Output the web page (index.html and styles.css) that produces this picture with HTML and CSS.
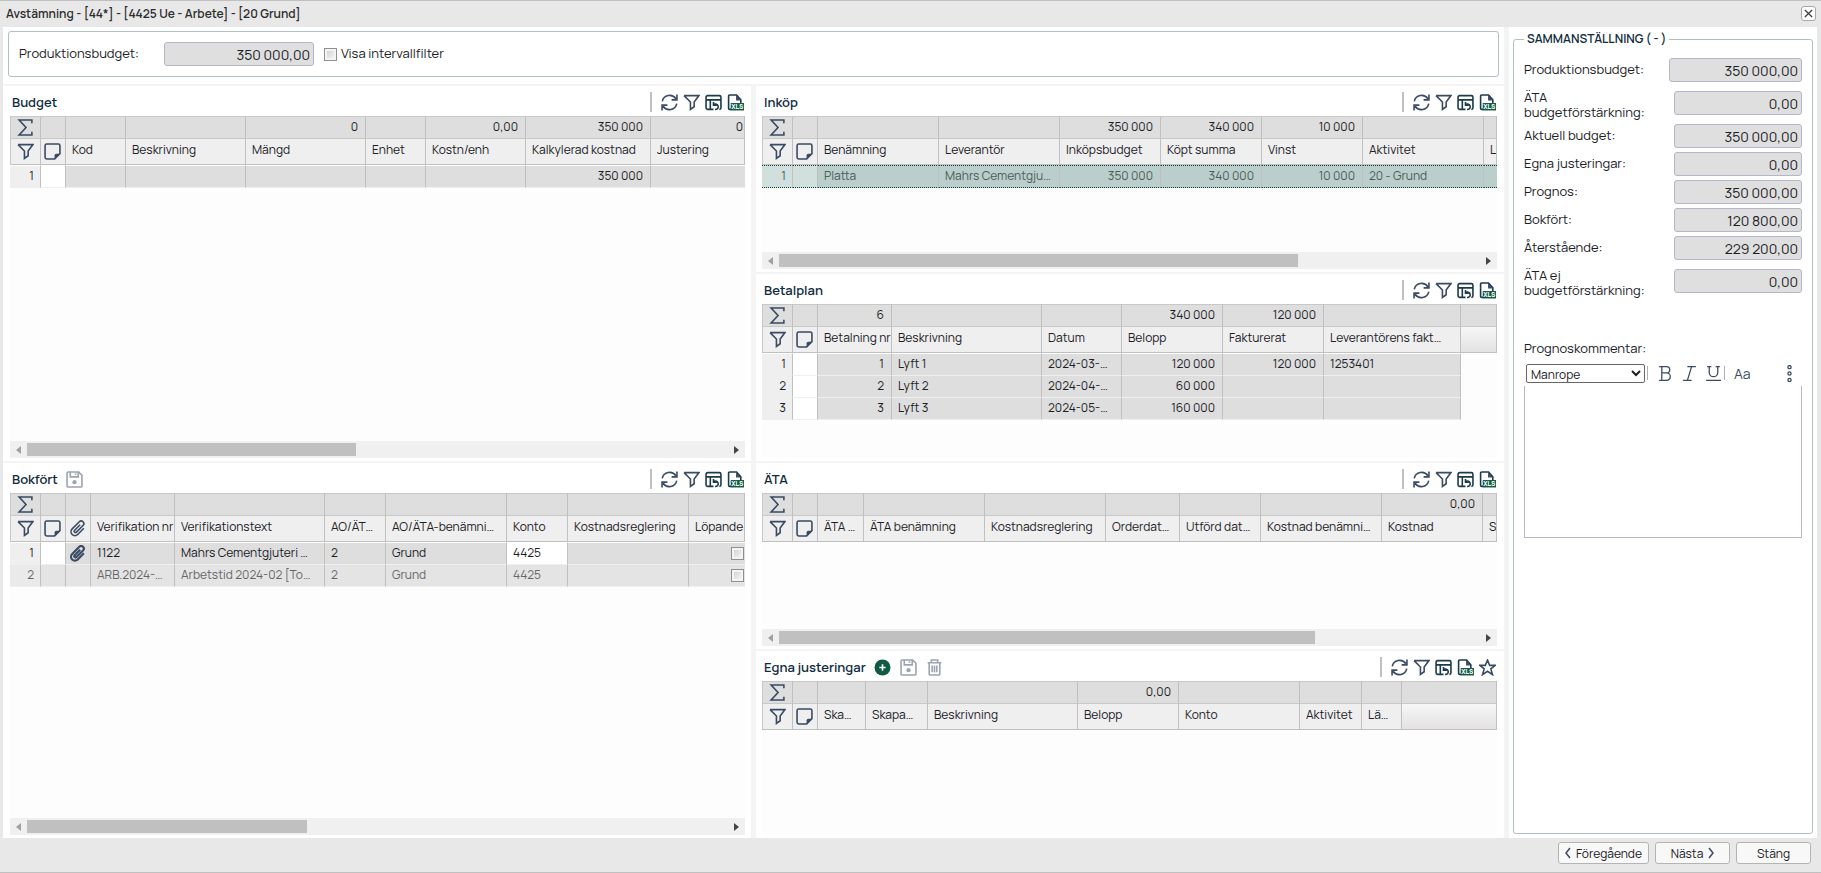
FILE: index.html
```html
<!DOCTYPE html>
<html lang="sv">
	<head>
		<meta charset="utf-8" />
		<title>Avstämning</title>
		<link rel="stylesheet" href="styles.css">
	</head>
	<body>
		<svg class="sprite" aria-hidden="true">
			<symbol id="sum" viewBox="0 0 16 16"><path d="M14 4V1H2l6.500 7L2 15h12v-3" /></symbol>
			<symbol id="filter" viewBox="0 0 16 16"><path d="M1 1.500h14l-4.500 6V12L7 14.500v-7L1 1.500" /></symbol>
			<symbol id="note" viewBox="0 0 16 16"><path d="M2.500 1h11a1.500 1.500 0 0 1 1.500 1.500V10l-5 5H2.500A1.500 1.500 0 0 1 1 13.500v-11A1.500 1.500 0 0 1 2.500 1z" /><path class="solid" d="M10 15v-3.500a1.500 1.500 0 0 1 1.500-1.500H15z" /></symbol>
			<symbol id="clip" viewBox="0 0 16 16"><path d="M10.500 4.500L5.300 9.700a1.200 1.200 0 0 0 1.700 1.700l6.200-6.200a2.400 2.400 0 0 0-3.500-3.500L3 8.400a3.600 3.600 0 0 0 5.200 5.200L14 7.800" /></symbol>
			<symbol id="refresh" viewBox="0 0 16 16"><path d="M1.200 7A7 6.800 0 0 1 14 4.500M14.800 9A7 6.800 0 0 1 2 11.500M15 .5v5h-5M1 15.500v-5h5" /></symbol>
			<symbol id="table" viewBox="0 0 16 16"><path d="M8 14.500H2.500A1.500 1.500 0 0 1 1 13V3a1.500 1.500 0 0 1 1.500-1.500h11A1.500 1.500 0 0 1 15 3v10a1.500 1.500 0 0 1-1.500 1.500M1 5.500h14M5 5.500v9" /><path d="M8 7.500v3h3M8.500 10a2.500 2.500 0 1 1 1 4.500" /></symbol>
			<symbol id="xls" viewBox="0 0 16 16"><path d="M4 14.500H2.500A1 1 0 0 1 1.500 13.500V2a1 1 0 0 1 1-1H9l4 4.500V9" /><path class="solid" d="M8.500 1v5H13z" /><path class="green" d="M3.500 8.500H16v7H3.500z" /><text x="4" y="14.200">XLS</text></symbol>
			<symbol id="save" viewBox="0 0 16 16"><path d="M2 1h10l3 3v10a1 1 0 0 1-1 1H2a1 1 0 0 1-1-1V2a1 1 0 0 1 1-1zM4 1v4.500h7.500V1M9 2v1.500" /><circle class="solid" cx="8" cy="10.500" r="2" /></symbol>
			<symbol id="trash" viewBox="0 0 16 16"><path d="M1.500 3.500h13M5 3.500V1h6v2.500M3 3.500V14a1 1 0 0 0 1 1h8a1 1 0 0 0 1-1V3.500M5.800 6v6.500M8 6v6.500M10.200 6v6.500" /></symbol>
			<symbol id="star" viewBox="0 0 16 16"><path d="M8 1l2 5h5.300l-4.200 3.300 1.600 5.400L8 11.500l-4.700 3.200 1.600-5.400L.7 6H6z" /></symbol>
			<symbol id="add" viewBox="0 0 16 16"><circle class="green" cx="8" cy="8" r="7.500" /><path class="plus" d="M8 5v6M5 8h6" /></symbol>
		</svg>

		<header class="titlebar">
			<h1>Avstämning - [44*] - [4425 Ue - Arbete] - [20 Grund]</h1>
			<button class="close" aria-label="Stäng fönster"><svg viewBox="0 0 10 10"><path d="M1 1l8 8M9 1L1 9" /></svg></button>
		</header>

		<div class="content">
			<main class="main">
				<div class="filterWrap">
					<div class="filterBox">
						<label class="filterLabel" for="prodBudget">Produktionsbudget:</label>
						<input class="amount" id="prodBudget" type="text" value="350 000,00" readonly />
						<input class="check" id="interval" type="checkbox" />
						<label for="interval">Visa intervallfilter</label>
					</div>
				</div>

				<div class="columns">
					<div class="column left">
						<section class="panel">
							<div class="panelHead">
								<h2>Budget</h2>
								<div class="tools">
									<button aria-label="Uppdatera"><svg><use href="#refresh" /></svg></button>
									<button aria-label="Filter"><svg><use href="#filter" /></svg></button>
									<button aria-label="Kolumner"><svg class="dark"><use href="#table" /></svg></button>
									<button aria-label="Excel"><svg class="dark"><use href="#xls" /></svg></button>
								</div>
							</div>
							<div class="gridBody">
								<table>
									<colgroup><col class="w31"><col class="w25"><col class="w60"><col class="w120"><col class="w120"><col class="w60"><col class="w100"><col class="w125"><col></colgroup>
									<thead>
										<tr class="sum"><td class="ico"><svg><use href="#sum" /></svg></td><td></td><td></td><td></td><td class="num">0</td><td></td><td class="num">0,00</td><td class="num">350 000</td><td class="num cut">0</td></tr>
										<tr class="head"><th class="ico"><svg><use href="#filter" /></svg></th><th class="ico"><svg><use href="#note" /></svg></th><th>Kod</th><th>Beskrivning</th><th>Mängd</th><th>Enhet</th><th>Kostn/enh</th><th>Kalkylerad kostnad</th><th>Justering</th></tr>
									</thead>
									<tbody>
										<tr><td class="rowNo">1</td><td class="edit"></td><td></td><td></td><td></td><td></td><td></td><td class="num">350 000</td><td></td></tr>
									</tbody>
								</table>
							</div>
							<div class="scroll"><div class="track"><div class="thumb" style="width: 47%"></div></div></div>
						</section>

						<section class="panel">
							<div class="panelHead">
								<h2>Bokfört</h2>
								<div class="actions">
									<button aria-label="Spara" disabled><svg><use href="#save" /></svg></button>
								</div>
								<div class="tools">
									<button aria-label="Uppdatera"><svg><use href="#refresh" /></svg></button>
									<button aria-label="Filter"><svg><use href="#filter" /></svg></button>
									<button aria-label="Kolumner"><svg class="dark"><use href="#table" /></svg></button>
									<button aria-label="Excel"><svg class="dark"><use href="#xls" /></svg></button>
								</div>
							</div>
							<div class="gridBody">
								<table>
									<colgroup><col class="w31"><col class="w25"><col class="w25"><col class="w84"><col class="w150"><col class="w61"><col class="w121"><col class="w61"><col class="w121"><col></colgroup>
									<thead>
										<tr class="sum"><td class="ico"><svg><use href="#sum" /></svg></td><td></td><td></td><td></td><td></td><td></td><td></td><td></td><td></td><td></td></tr>
										<tr class="head"><th class="ico"><svg><use href="#filter" /></svg></th><th class="ico"><svg><use href="#note" /></svg></th><th class="ico"><svg><use href="#clip" /></svg></th><th class="clipped">Verifikation nr</th><th>Verifikationstext</th><th>AO/ÄTA-nr</th><th>AO/ÄTA-benämning</th><th>Konto</th><th>Kostnadsreglering</th><th class="clipped">Löpande</th></tr>
									</thead>
									<tbody>
										<tr><td class="rowNo">1</td><td class="edit"></td><td class="ico"><svg class="bold"><use href="#clip" /></svg></td><td>1122</td><td class="tight">Mahrs Cementgjuteri AB</td><td>2</td><td>Grund</td><td class="edit">4425</td><td></td><td class="num cut"><input class="check" type="checkbox" aria-label="Löpande 1" /></td></tr>
										<tr class="muted"><td class="rowNo">2</td><td></td><td></td><td>ARB.2024-02</td><td>Arbetstid 2024-02 [Tommy]</td><td>2</td><td>Grund</td><td>4425</td><td></td><td class="num cut"><input class="check" type="checkbox" aria-label="Löpande 2" /></td></tr>
									</tbody>
								</table>
							</div>
							<div class="scroll"><div class="track"><div class="thumb" style="width: 40%"></div></div></div>
						</section>
					</div>

					<div class="column right">
						<section class="panel">
							<div class="panelHead">
								<h2>Inköp</h2>
								<div class="tools">
									<button aria-label="Uppdatera"><svg><use href="#refresh" /></svg></button>
									<button aria-label="Filter"><svg><use href="#filter" /></svg></button>
									<button aria-label="Kolumner"><svg class="dark"><use href="#table" /></svg></button>
									<button aria-label="Excel"><svg class="dark"><use href="#xls" /></svg></button>
								</div>
							</div>
							<div class="gridBody">
								<table>
									<colgroup><col class="w31"><col class="w25"><col class="w121"><col class="w121"><col class="w101"><col class="w101"><col class="w101"><col class="w121"><col></colgroup>
									<thead>
										<tr class="sum"><td class="ico"><svg><use href="#sum" /></svg></td><td></td><td></td><td></td><td class="num">350 000</td><td class="num">340 000</td><td class="num">10 000</td><td></td><td></td></tr>
										<tr class="head"><th class="ico"><svg><use href="#filter" /></svg></th><th class="ico"><svg><use href="#note" /></svg></th><th>Benämning</th><th>Leverantör</th><th>Inköpsbudget</th><th>Köpt summa</th><th>Vinst</th><th>Aktivitet</th><th class="clipped">L</th></tr>
									</thead>
									<tbody>
										<tr class="selected"><td class="rowNo">1</td><td class="edit"></td><td>Platta</td><td>Mahrs Cementgjuteri</td><td class="num">350 000</td><td class="num">340 000</td><td class="num">10 000</td><td>20 - Grund</td><td></td></tr>
									</tbody>
								</table>
							</div>
							<div class="scroll"><div class="track"><div class="thumb" style="width: 74%"></div></div></div>
						</section>

						<section class="panel">
							<div class="panelHead">
								<h2>Betalplan</h2>
								<div class="tools">
									<button aria-label="Uppdatera"><svg><use href="#refresh" /></svg></button>
									<button aria-label="Filter"><svg><use href="#filter" /></svg></button>
									<button aria-label="Kolumner"><svg class="dark"><use href="#table" /></svg></button>
									<button aria-label="Excel"><svg class="dark"><use href="#xls" /></svg></button>
								</div>
							</div>
							<div class="gridBody">
								<table>
									<colgroup><col class="w31"><col class="w25"><col class="w74"><col class="w150"><col class="w80"><col class="w101"><col class="w101"><col class="w137"><col></colgroup>
									<thead>
										<tr class="sum"><td class="ico"><svg><use href="#sum" /></svg></td><td></td><td class="num">6</td><td></td><td></td><td class="num">340 000</td><td class="num">120 000</td><td></td><td></td></tr>
										<tr class="head"><th class="ico"><svg><use href="#filter" /></svg></th><th class="ico"><svg><use href="#note" /></svg></th><th class="clipped">Betalning nr</th><th>Beskrivning</th><th>Datum</th><th>Belopp</th><th>Fakturerat</th><th class="tight">Leverantörens fakturanr</th><th class="filler"></th></tr>
									</thead>
									<tbody>
										<tr><td class="rowNo">1</td><td class="edit"></td><td class="num">1</td><td>Lyft 1</td><td class="tight">2024-03-31</td><td class="num">120 000</td><td class="num">120 000</td><td>1253401</td></tr>
										<tr><td class="rowNo">2</td><td class="edit"></td><td class="num">2</td><td>Lyft 2</td><td class="tight">2024-04-30</td><td class="num">60 000</td><td></td><td></td></tr>
										<tr><td class="rowNo">3</td><td class="edit"></td><td class="num">3</td><td>Lyft 3</td><td class="tight">2024-05-31</td><td class="num">160 000</td><td></td><td></td></tr>
									</tbody>
								</table>
							</div>
						</section>

						<section class="panel">
							<div class="panelHead">
								<h2>ÄTA</h2>
								<div class="tools">
									<button aria-label="Uppdatera"><svg><use href="#refresh" /></svg></button>
									<button aria-label="Filter"><svg><use href="#filter" /></svg></button>
									<button aria-label="Kolumner"><svg class="dark"><use href="#table" /></svg></button>
									<button aria-label="Excel"><svg class="dark"><use href="#xls" /></svg></button>
								</div>
							</div>
							<div class="gridBody">
								<table>
									<colgroup><col class="w31"><col class="w25"><col class="w46"><col class="w121"><col class="w121"><col class="w74"><col class="w81"><col class="w121"><col class="w101"><col></colgroup>
									<thead>
										<tr class="sum"><td class="ico"><svg><use href="#sum" /></svg></td><td></td><td></td><td></td><td></td><td></td><td></td><td></td><td class="num">0,00</td><td></td></tr>
										<tr class="head"><th class="ico"><svg><use href="#filter" /></svg></th><th class="ico"><svg><use href="#note" /></svg></th><th>ÄTA nr</th><th>ÄTA benämning</th><th>Kostnadsreglering</th><th>Orderdatum</th><th>Utförd datum</th><th>Kostnad benämning</th><th>Kostnad</th><th class="clipped">S</th></tr>
									</thead>
								</table>
							</div>
							<div class="scroll"><div class="track"><div class="thumb" style="width: 76.4%"></div></div></div>
						</section>

						<section class="panel">
							<div class="panelHead">
								<h2>Egna justeringar</h2>
								<div class="actions">
									<button aria-label="Lägg till"><svg><use href="#add" /></svg></button>
									<button aria-label="Spara" disabled><svg><use href="#save" /></svg></button>
									<button aria-label="Ta bort" disabled><svg><use href="#trash" /></svg></button>
								</div>
								<div class="tools">
									<button aria-label="Uppdatera"><svg><use href="#refresh" /></svg></button>
									<button aria-label="Filter"><svg><use href="#filter" /></svg></button>
									<button aria-label="Kolumner"><svg class="dark"><use href="#table" /></svg></button>
									<button aria-label="Excel"><svg class="dark"><use href="#xls" /></svg></button>
									<button aria-label="Favorit"><svg><use href="#star" /></svg></button>
								</div>
							</div>
							<div class="gridBody">
								<table>
									<colgroup><col class="w31"><col class="w25"><col class="w48"><col class="w62"><col class="w150"><col class="w101"><col class="w121"><col class="w62"><col class="w40"><col></colgroup>
									<thead>
										<tr class="sum"><td class="ico"><svg><use href="#sum" /></svg></td><td></td><td></td><td></td><td></td><td class="num">0,00</td><td></td><td></td><td></td><td></td></tr>
										<tr class="head"><th class="ico"><svg><use href="#filter" /></svg></th><th class="ico"><svg><use href="#note" /></svg></th><th class="tight">Skapad</th><th class="tight">Skapad av</th><th>Beskrivning</th><th>Belopp</th><th>Konto</th><th class="clipped">Aktivitet</th><th>Längd</th><th class="filler"></th></tr>
									</thead>
								</table>
							</div>
						</section>
					</div>
				</div>
			</main>

			<aside class="side">
				<fieldset>
					<legend>SAMMANSTÄLLNING ( - )</legend>
					<div class="field wide"><label for="s1">Produktionsbudget:</label><input class="amount" id="s1" type="text" value="350 000,00" readonly /></div>
					<div class="field tall"><label for="s2">ÄTA budgetförstärkning:</label><input class="amount" id="s2" type="text" value="0,00" readonly /></div>
					<div class="field"><label for="s3">Aktuell budget:</label><input class="amount" id="s3" type="text" value="350 000,00" readonly /></div>
					<div class="field"><label for="s4">Egna justeringar:</label><input class="amount" id="s4" type="text" value="0,00" readonly /></div>
					<div class="field"><label for="s5">Prognos:</label><input class="amount" id="s5" type="text" value="350 000,00" readonly /></div>
					<div class="field"><label for="s6">Bokfört:</label><input class="amount" id="s6" type="text" value="120 800,00" readonly /></div>
					<div class="field"><label for="s7">Återstående:</label><input class="amount" id="s7" type="text" value="229 200,00" readonly /></div>
					<div class="field tall"><label for="s8">ÄTA ej budgetförstärkning:</label><input class="amount" id="s8" type="text" value="0,00" readonly /></div>

					<label class="commentLabel" for="comment">Prognoskommentar:</label>
					<div class="editorBar">
						<select aria-label="Typsnitt"><option>Manrope</option></select>
						<div class="editorGroup marks">
							<button aria-label="Fet"><svg viewBox="0 0 16 16"><path d="M2 1.500h7a3 3 0 0 1 0 6H4.500M9 7.500a3.500 3.500 0 0 1 0 7H2M4.500 1.500v13" /></svg></button>
							<button aria-label="Kursiv"><svg viewBox="0 0 16 16"><path d="M6 1.500h8M2 14.500h8M10 1.500l-4 13" /></svg></button>
							<button aria-label="Understruken"><svg viewBox="0 0 16 16"><path d="M2 1.500h4M10 1.500h4M4 1.500V7a4 4 0 0 0 8 0V1.500M1 14.500h14" /></svg></button>
						</div>
						<div class="editorGroup"><button class="case">Aa</button></div>
						<button class="more" aria-label="Mer"><svg viewBox="0 0 16 16"><circle cx="8" cy="2" r="1.500" /><circle cx="8" cy="8" r="1.500" /><circle cx="8" cy="14" r="1.500" /></svg></button>
					</div>
					<textarea id="comment"></textarea>
				</fieldset>
			</aside>
		</div>

		<footer class="footer">
			<button class="btn prev"><svg viewBox="0 0 6 12"><path d="M5 1L1 6l4 5" /></svg>Föregående</button>
			<button class="btn">Nästa<svg viewBox="0 0 6 12"><path d="M1 1l4 5-4 5" /></svg></button>
			<button class="btn">Stäng</button>
		</footer>
	</body>
</html>
```

FILE: styles.css
```css
* {
	box-sizing: border-box;
}
body {
	margin: 0px;
	height: 100vh;
	display: flex;
	flex-direction: column;
	background: #e8e8e8;
	border-top: 1px solid #c0c0c0;
	border-bottom: 1px solid #c0c0c0;
	color: #1a2026;
	font-family: Manrope, Inter, "Liberation Sans", sans-serif;
	font-size: 13px;
	overflow: hidden;
}
button, input, select, textarea {
	font: inherit;
	color: inherit;
}
button {
	padding: 0px;
	border: none;
	background: none;
}
svg {
	display: block;
	width: 17px;
	height: 17px;
	fill: none;
	stroke: #3a4b63;
	stroke-width: 1.5;
}
.sprite {
	display: none;
}
.solid {
	fill: #3a4b63;
	stroke: none;
}
.green {
	fill: #0f5a43;
	stroke: none;
}
.plus {
	stroke: #fff;
}
symbol text {
	fill: #fff;
	stroke: none;
	font-size: 6px;
	font-weight: 800;
}
svg.dark {
	stroke: #1c3a4c;
}
svg.bold {
	stroke-width: 2;
}

/* title bar */
.titlebar {
	height: 26px;
	padding: 0px 5px 1px 6px;
	display: flex;
	align-items: center;
	justify-content: space-between;
}
h1 {
	margin: 0px;
	font-size: 12px;
	font-weight: 600;
	color: #2c2c2c;
}
.close {
	width: 15px;
	height: 15px;
	display: flex;
	align-items: center;
	justify-content: center;
	background: #fdfdfd;
	border: 1px solid #a8a8a8;
	border-radius: 3px;
}
.close svg {
	width: 9px;
	height: 9px;
	stroke: #444;
}

/* layout */
.content {
	flex: 1;
	min-height: 0px;
	margin: 0px 4px 0px 3px;
	display: flex;
	background: #fff;
}
.main {
	flex: 1;
	min-width: 0px;
	display: flex;
	flex-direction: column;
}
.filterWrap {
	padding: 4px 5px 7px;
	border-bottom: 2px solid #f4f4f4;
}
.filterBox {
	height: 46px;
	padding-left: 10px;
	display: flex;
	align-items: center;
	border: 1px solid #b0c0c4;
	border-radius: 3px;
}
.filterBox .amount {
	width: 150px;
	margin-right: 10px;
}
.filterBox .check {
	margin-right: 4px;
}
.filterBox label {
	padding-bottom: 2px;
}
.filterLabel {
	width: 145px;
}
.columns {
	flex: 1;
	min-height: 0px;
	display: grid;
	grid-template-columns: 1fr 5px 1fr;
	background: #f4f4f4;
}
.column {
	min-width: 0px;
	display: grid;
	gap: 2px;
}
.left {
	grid-template-rows: repeat(2, minmax(0px, 1fr));
}
.right {
	grid-column: 3;
	grid-template-rows: repeat(2, minmax(0px, 186fr) minmax(0px, 187fr));
}
.panel {
	min-width: 0px;
	padding: 0px 6px 3px 7px;
	display: flex;
	flex-direction: column;
	background: #fff;
}
.right .panel {
	padding: 0px 7px 3px 6px;
}
.panelHead {
	height: 30px;
	padding: 2px 1px 0px 2px;
	display: flex;
	align-items: center;
}
h2 {
	margin: 0px;
	font-size: 13px;
	font-weight: 600;
	color: #0f2b3d;
}
.actions {
	margin-left: 8px;
	display: flex;
	gap: 9px;
}
.actions button:disabled {
	opacity: 0.5;
}
.tools {
	height: 20px;
	margin-left: auto;
	padding-left: 9px;
	display: flex;
	align-items: center;
	gap: 5px;
	border-left: 2px solid #c0c0c0;
}

/* grids */
.gridBody {
	flex: 1;
	min-height: 0px;
	overflow: hidden;
	background: #fdfdfd;
}
table {
	width: 100%;
	table-layout: fixed;
	border-collapse: separate;
	border-spacing: 0px;
	font-size: 12px;
	line-height: 15px;
}
.w25 { width: 25px; }
.w31 { width: 31px; }
.w40 { width: 40px; }
.w46 { width: 46px; }
.w48 { width: 48px; }
.w60 { width: 60px; }
.w61 { width: 61px; }
.w62 { width: 62px; }
.w74 { width: 74px; }
.w80 { width: 80px; }
.w81 { width: 81px; }
.w84 { width: 84px; }
.w100 { width: 100px; }
.w101 { width: 101px; }
.w120 { width: 120px; }
.w121 { width: 121px; }
.w125 { width: 125px; }
.w137 { width: 137px; }
.w150 { width: 150px; }
td, th {
	height: 22px;
	padding: 0px 6px 2px;
	text-align: left;
	font-weight: 400;
	white-space: nowrap;
	overflow: hidden;
	text-overflow: ellipsis;
	background: #dedede;
	border-right: 1px solid #c0c0c0;
	border-bottom: 1px solid #efefef;
}
.num {
	padding-right: 7px;
	text-align: right;
}
.sum td {
	height: 23px;
	border-top: 1px solid #c8c8c8;
	border-bottom: 1px solid #c8c8c8;
}
.head th {
	height: 26px;
	padding-bottom: 4px;
	background: #efefef;
	border-bottom: 1px solid #c0c0c0;
}
.sum td:first-child, .head th:first-child {
	border-left: 1px solid #c8c8c8;
}
tbody tr:first-child td {
	height: 23px;
	border-top: 1px solid #fff;
}
tbody td:nth-child(9):last-child, tbody td:nth-child(10):last-child {
	border-right: none;
}
td.ico, .head th.ico {
	padding: 0px 0px 0px 3px;
}
.sum td.ico:first-child, .head th.ico:first-child {
	padding-left: 6px;
}
.clipped {
	text-overflow: clip;
}
.head .clipped {
	padding-right: 0px;
}
.tight, .head .tight {
	padding-right: 12px;
}
.cut, .sum td.cut {
	padding-right: 1px;
}
.cut .check {
	display: inline-block;
	vertical-align: middle;
}
.rowNo {
	text-align: right;
	background: #efefef;
}
.edit {
	background: #fff;
}
.head .filler {
	background: linear-gradient(#f7f7f7, #e4e2e2);
}
.muted td {
	color: #666;
	background: #e4e4e4;
}
.muted .rowNo {
	background: #eaeaea;
}
tbody .selected:first-child td {
	color: #4c5c5a;
	background: #bacfcb;
	border-top: 1px dotted #143c38;
	border-bottom: 1px dotted #143c38;
}
tbody .selected:first-child .rowNo, tbody .selected:first-child .edit {
	background: #d1e0dd;
}

.scroll {
	height: 17px;
	display: flex;
	align-items: center;
	justify-content: space-between;
	background: #f0f0f0;
}
.scroll::before, .scroll::after {
	content: "";
	margin: 0px 6px;
	border: 4px solid transparent;
}
.scroll::before {
	border-left: none;
	border-right: 5px solid #a0a0a0;
}
.scroll::after {
	border-right: none;
	border-left: 5px solid #444;
}
.track {
	flex: 1;
}
.thumb {
	height: 13px;
	background: #c0c0c0;
}

/* controls */
.amount {
	height: 24px;
	padding: 0px 3px;
	text-align: right;
	font-size: 14px;
	background: #dfdfdf;
	border: 1px solid #b6b6c8;
	border-radius: 3px;
}
.check {
	appearance: none;
	width: 13px;
	height: 13px;
	margin: 0px;
	background: linear-gradient(135deg, #ccc, #fafafa);
	border: 1px solid #8e8f8f;
	box-shadow: inset 0 0 0 2px #f4f4f4;
}

/* summary */
.side {
	width: 313px;
	padding: 3px 4px 4px;
	display: flex;
	border-left: 5px solid #f4f4f4;
}
fieldset {
	flex: 1;
	min-width: 0px;
	margin: 0px;
	padding: 8px 10px 0px;
	border: 1px solid #b0c0c4;
	border-radius: 3px;
}
legend {
	padding: 0px 3px;
	line-height: 18px;
	font-size: 12px;
	font-weight: 600;
	color: #0f2b3d;
}
.field {
	height: 28px;
	display: flex;
	align-items: center;
	justify-content: space-between;
	line-height: 15px;
}
.field label {
	width: 130px;
	padding-bottom: 2px;
}
.field .amount {
	width: 128px;
}
.wide .amount {
	width: 133px;
}
.tall {
	height: 38px;
}
.tall label {
	padding: 3px 0px 0px;
}
.commentLabel {
	display: block;
	margin-top: 40px;
	line-height: 16px;
}
.editorBar {
	height: 30px;
	padding: 4px 2px 0px;
	display: flex;
	align-items: center;
}
.editorBar select {
	width: 119px;
	height: 19px;
	padding: 0px;
	font-size: 12px;
	background: #fff;
	border: 1px solid #666;
	border-radius: 2px;
}
.editorGroup {
	height: 14px;
	margin-left: 2px;
	padding-left: 9px;
	display: flex;
	align-items: center;
	gap: 7px;
	border-left: 1px solid #b0b0b0;
}
.editorBar svg {
	stroke-width: 1.2;
}
.case {
	font-size: 14px;
	color: #3a4b63;
}
.more {
	margin-left: auto;
	margin-right: 2px;
}
textarea {
	display: block;
	width: 100%;
	height: 152px;
	resize: none;
	background: #fff;
	border: 1px solid #b6b6c8;
	border-top: none;
}

/* footer */
.footer {
	height: 34px;
	padding: 4px 10px 8px;
	display: flex;
	justify-content: flex-end;
	gap: 6px;
}
.btn {
	width: 75px;
	height: 22px;
	display: flex;
	align-items: center;
	justify-content: center;
	gap: 5px;
	font-size: 12px;
	background: #f8f8f8;
	border: 1px solid #b4b4b4;
	border-radius: 3px;
}
.prev {
	width: 91px;
}
.btn svg {
	width: 6px;
	height: 12px;
}
```
